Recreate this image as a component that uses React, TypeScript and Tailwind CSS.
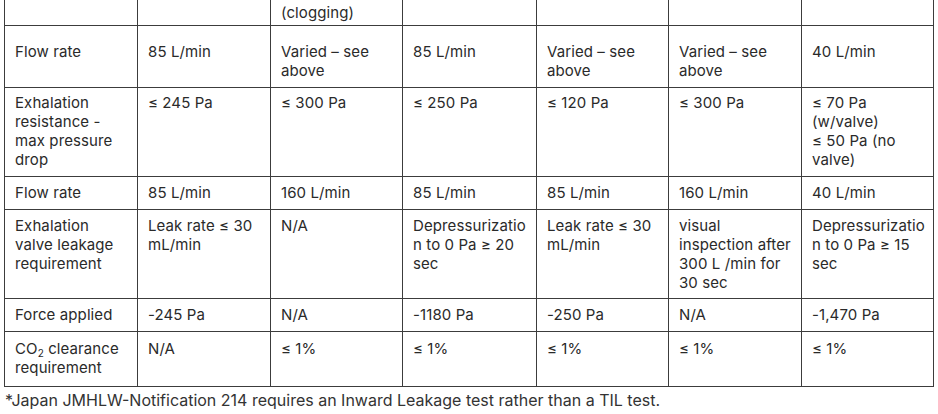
import React from "react"

type Row = { cells: string[][]; cls: string }

const rows: Row[] = [
  { cls: "pt-[3px] pb-[3px]", cells: [[""], [""], ["(clogging)"], [""], [""], [""], [""]] },
  {
    cls: "pt-[16px] pb-[7px]",
    cells: [["Flow rate"], ["85 L/min"], ["Varied – see", "above"], ["85 L/min"], ["Varied – see", "above"], ["Varied – see", "above"], ["40 L/min"]],
  },
  {
    cls: "pt-[5px] pb-[7px]",
    cells: [
      ["Exhalation", "resistance -", "max pressure", "drop"],
      ["≤ 245 Pa"],
      ["≤ 300 Pa"],
      ["≤ 250 Pa"],
      ["≤ 120 Pa"],
      ["≤ 300 Pa"],
      ["≤ 70 Pa", "(w/valve)", "≤ 50 Pa (no", "valve)"],
    ],
  },
  {
    cls: "pt-[6px] pb-[7px]",
    cells: [["Flow rate"], ["85 L/min"], ["160 L/min"], ["85 L/min"], ["85 L/min"], ["160 L/min"], ["40 L/min"]],
  },
  {
    cls: "pt-[6px] pb-[6px]",
    cells: [
      ["Exhalation", "valve leakage", "requirement"],
      ["Leak rate ≤ 30", "mL/min"],
      ["N/A"],
      ["Depressurizatio", "n to 0 Pa ≥ 20", "sec"],
      ["Leak rate ≤ 30", "mL/min"],
      ["visual", "inspection after", "300 L /min for", "30 sec"],
      ["Depressurizatio", "n to 0 Pa ≥ 15", "sec"],
    ],
  },
  {
    cls: "pt-[6px] pb-[7px]",
    cells: [["Force applied"], ["-245 Pa"], ["N/A"], ["-1180 Pa"], ["-250 Pa"], ["N/A"], ["-1,470 Pa"]],
  },
  {
    cls: "pt-[7px] pb-[9px]",
    cells: [["CO2 clearance", "requirement"], ["N/A"], ["≤ 1%"], ["≤ 1%"], ["≤ 1%"], ["≤ 1%"], ["≤ 1%"]],
  },
]

const widths = ["w-[133px]", "w-[133px]", "w-[132px]", "w-[134px]", "w-[132px]", "w-[133px]", "w-[132px]"]

function Line({ text }: { text: string }) {
  if (text.startsWith("CO2")) {
    return (
      <>
        CO<sub className="text-[10px] leading-none">2</sub>
        {text.slice(3)}
      </>
    )
  }
  return <>{text}</>
}

export default function App() {
  return (
    <div className="w-[938px] h-[414px] overflow-hidden bg-white text-[#2a2a2a] font-['Inter',sans-serif]">
      <table className="ml-[4px] border-collapse table-fixed">
        <colgroup>
          {widths.map((w, i) => (
            <col key={i} className={w} />
          ))}
        </colgroup>
        <tbody>
          {rows.map((row, r) => (
            <tr key={r}>
              {row.cells.map((lines, c) => (
                <td
                  key={c}
                  className={`border border-[#3c3c3c] ${r === 0 ? "border-t-0" : ""} align-top pl-[10px] pr-[2px] ${row.cls} text-[15px] leading-[19px] tracking-[0.1px] whitespace-nowrap`}
                >
                  {lines.map((t, i) => (
                    <div key={i}>
                      <Line text={t} />
                    </div>
                  ))}
                </td>
              ))}
            </tr>
          ))}
        </tbody>
      </table>
      <p className="pl-[5px] pt-[3px] text-[16px] leading-[20px] text-[#333]">
        *Japan JMHLW-Notification 214 requires an Inward Leakage test rather than a TIL test.
      </p>
    </div>
  )
}
